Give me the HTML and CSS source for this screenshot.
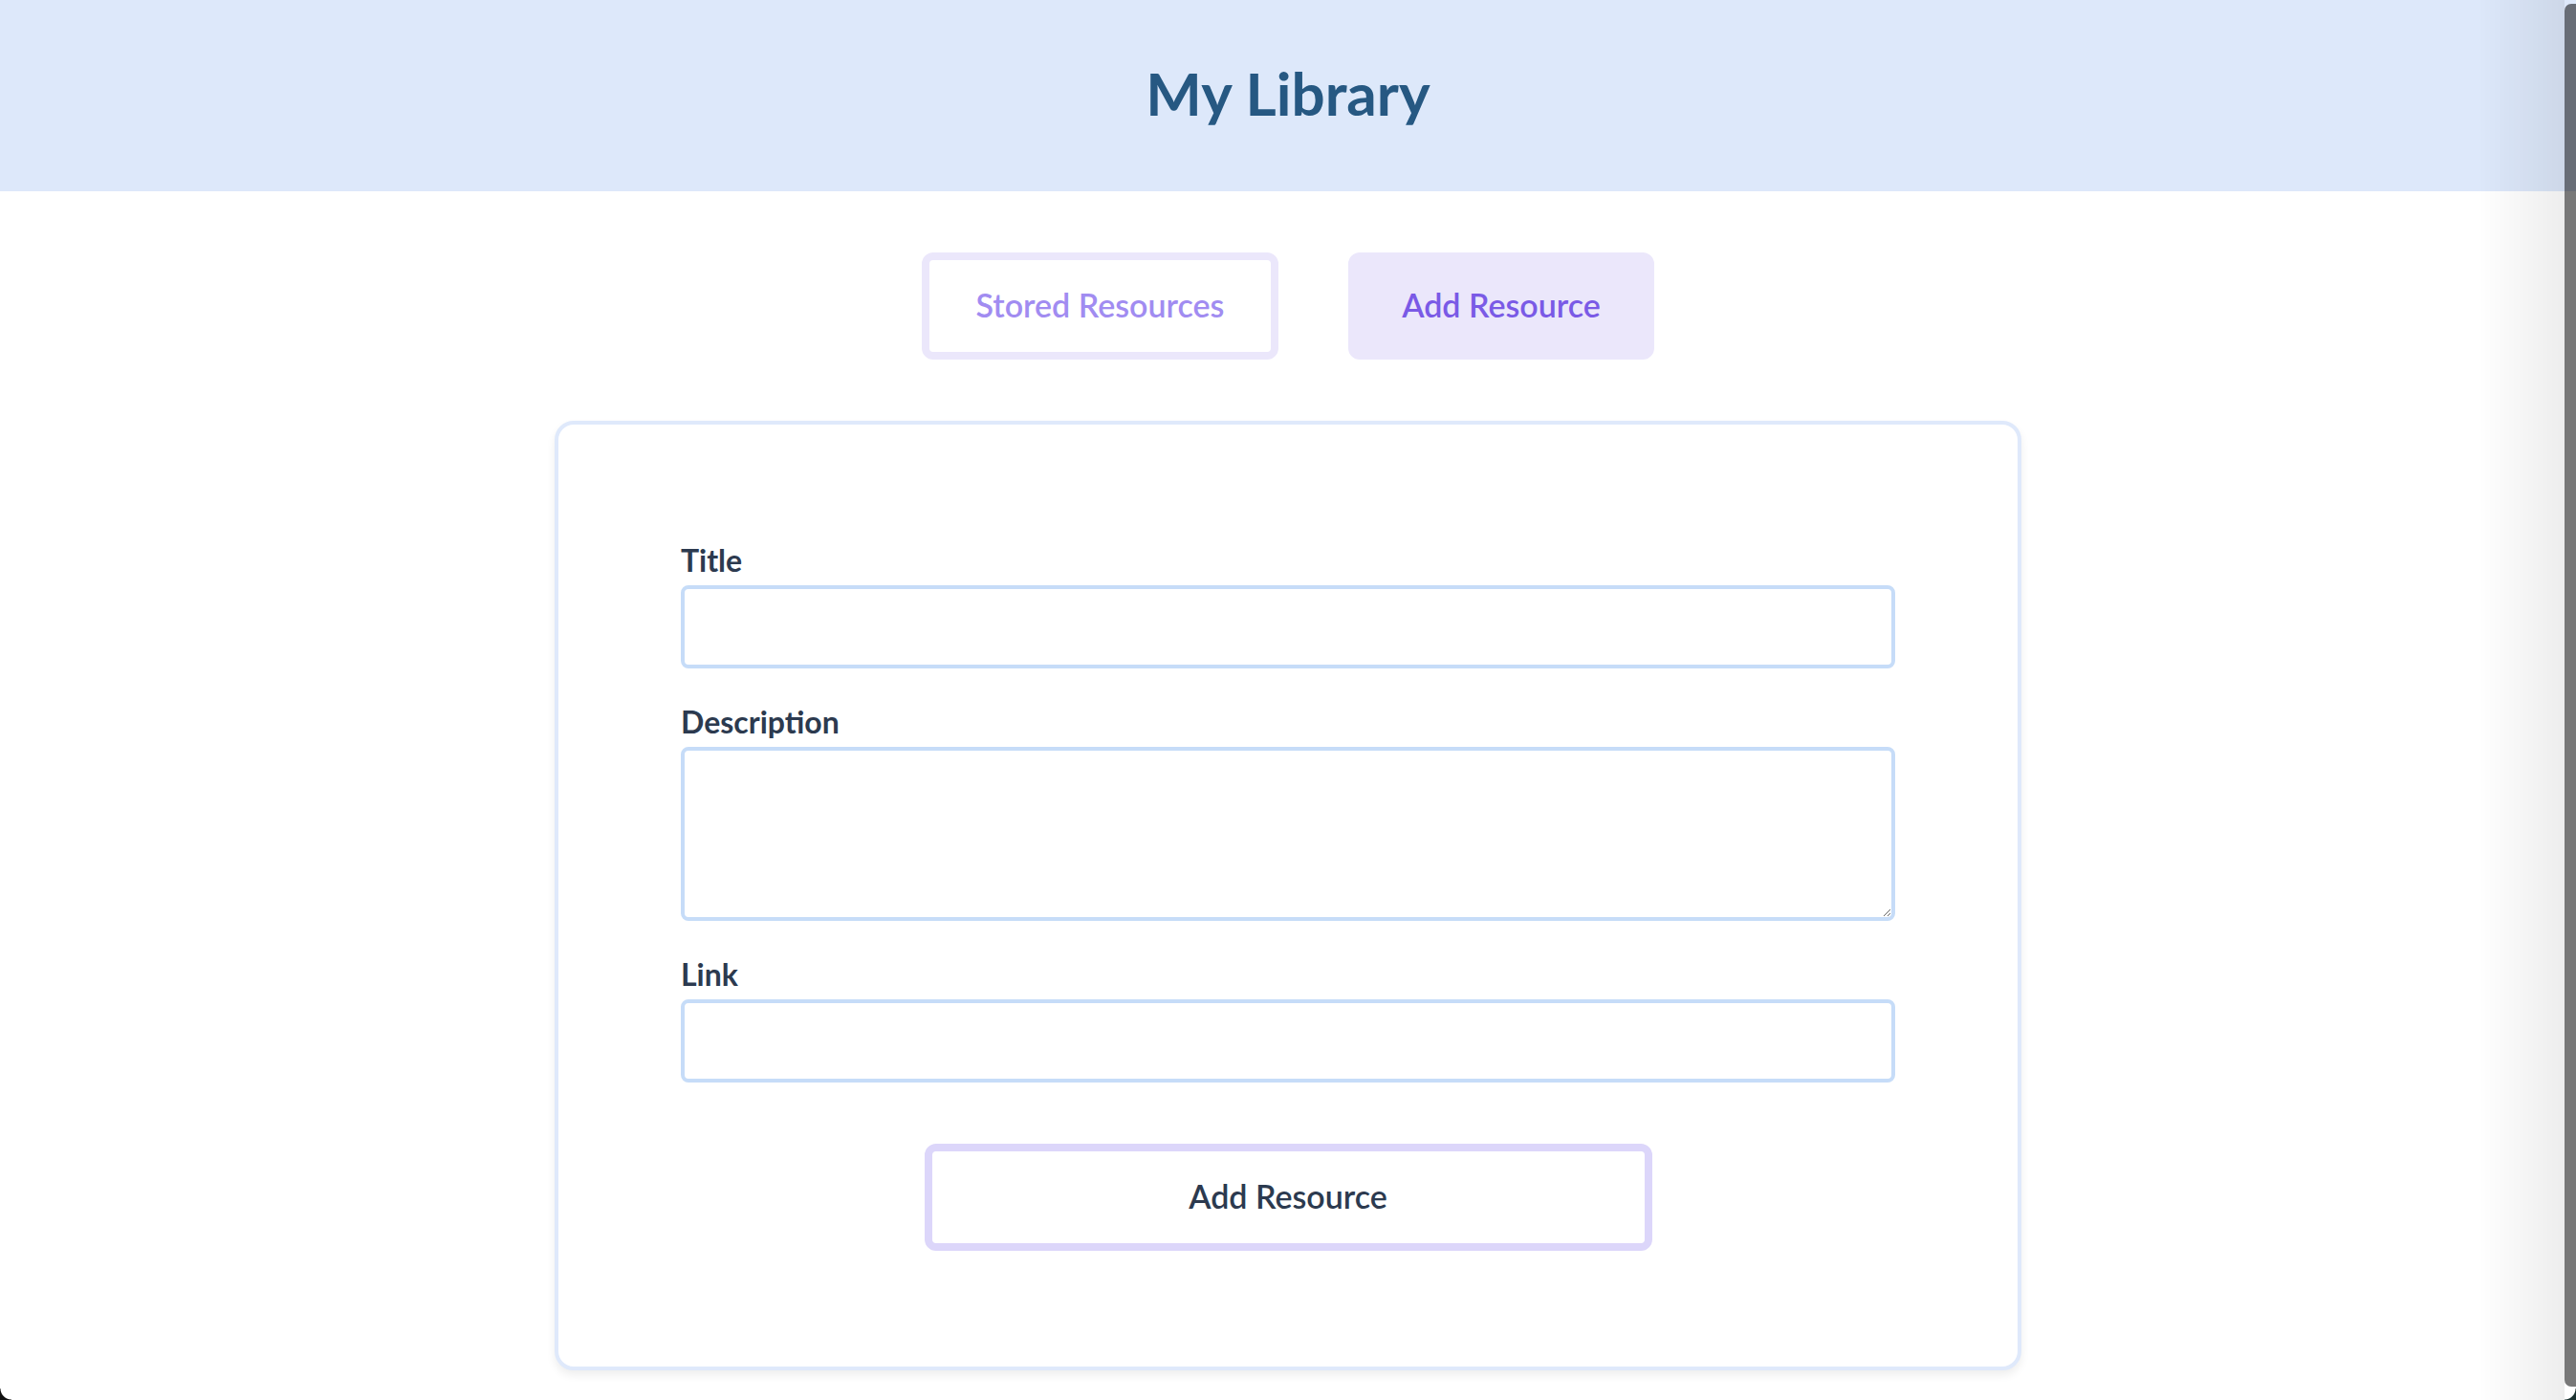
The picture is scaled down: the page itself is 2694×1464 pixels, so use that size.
FILE: index.html
```html
<!DOCTYPE html>
<html lang="en">
<head>
<meta charset="utf-8">
<title>My Library</title>
<link rel="stylesheet" href="styles.css">
</head>
<body>
<header class="site-header">
  <h1 class="site-title">My Library</h1>
</header>
<main class="main">
  <nav class="tabs">
    <button class="tab tab-outline" type="button">Stored Resources</button>
    <button class="tab tab-active" type="button">Add Resource</button>
  </nav>
  <section class="card">
    <form class="form">
      <div class="field">
        <label class="label" for="title">Title</label>
        <input class="input" id="title" type="text">
      </div>
      <div class="field">
        <label class="label" for="description">Description</label>
        <textarea class="input textarea" id="description"></textarea>
      </div>
      <div class="field">
        <label class="label" for="link">Link</label>
        <input class="input" id="link" type="text">
      </div>
      <div class="actions">
        <button class="submit" type="button">Add Resource</button>
      </div>
    </form>
  </section>
</main>
<div class="edge-shade"></div>
<div class="edge-bar"></div>
<div class="corner corner-bl"></div>
<div class="corner corner-br"></div>
</body>
</html>
```

FILE: styles.css
```css
* {
  box-sizing: border-box;
}

html, body {
  margin: 0;
  padding: 0;
  background: #ffffff;
  height: 100%;
  overflow: hidden;
}

body {
  font-family: Lato, "Noto Sans", "Liberation Sans", sans-serif;
  color: #2c3a4f;
}

.site-header {
  height: 200px;
  background: #dde8fa;
  padding-top: 60px;
}

.site-title {
  margin: 0;
  text-align: center;
  font-size: 62px;
  line-height: 74px;
  font-weight: 700;
  color: #265882;
}

.main {
  display: flex;
  flex-direction: column;
  align-items: center;
  padding-top: 64px;
}

.tabs {
  display: flex;
  gap: 73px;
  justify-content: center;
}

.tab {
  font-family: inherit;
  font-size: 34px;
  line-height: 40px;
  font-weight: 600;
  padding: 27px 40px 29px;
  border: 8px solid #ebe7fb;
  border-radius: 12px;
  cursor: pointer;
}

.tab-outline {
  background: #ffffff;
  color: #a18cf1;
  width: 373px;
}

.tab-active {
  background: #ebe7fb;
  color: #7a5ae6;
  width: 320px;
}

.card {
  margin-top: 64px;
  width: 1534px;
  border: 4px solid #dfe9fb;
  border-radius: 20px;
  background: #ffffff;
  box-shadow: 0 5px 10px rgba(0, 0, 0, 0.07);
  padding: 123px 128px 121px;
}

.form {
  display: flex;
  flex-direction: column;
  gap: 37px;
}

.field {
  display: flex;
  flex-direction: column;
  gap: 7px;
}

.label {
  font-size: 32px;
  line-height: 38px;
  font-weight: 700;
  color: #2c3a4f;
}

.input {
  display: block;
  width: 100%;
  height: 87px;
  border: 4px solid #c6dcf8;
  border-radius: 8px;
  background: #ffffff;
  font-family: inherit;
  font-size: 28px;
  padding: 0 16px;
  outline: none;
}

.textarea {
  height: 182px;
  padding: 12px 16px;
  resize: vertical;
}

.actions {
  display: flex;
  justify-content: center;
  padding-top: 27px;
}

.submit {
  width: 761px;
  height: 112px;
  border: 8px solid #dcd6fa;
  border-radius: 12px;
  background: #ffffff;
  font-family: inherit;
  font-size: 34px;
  line-height: 40px;
  font-weight: 600;
  color: #2c3a4f;
  padding: 0 0 3px;
  cursor: pointer;
}

.edge-shade {
  position: fixed;
  top: 0;
  bottom: 0;
  right: 12px;
  width: 90px;
  background: linear-gradient(to right, rgba(0, 0, 0, 0), rgba(0, 0, 0, 0.07));
  pointer-events: none;
}

.edge-bar {
  position: fixed;
  top: 4px;
  bottom: 14px;
  right: 0;
  width: 12px;
  background: rgba(0, 0, 0, 0.53);
  border-radius: 7px 0 0 7px;
  pointer-events: none;
}

.corner {
  position: fixed;
  bottom: 0;
  width: 12px;
  height: 12px;
  pointer-events: none;
}

.corner-bl {
  left: 0;
  background: radial-gradient(circle at 100% 0, transparent 11px, #111 12px);
}

.corner-br {
  right: 0;
  background: radial-gradient(circle at 0 0, transparent 11px, #1d3331 12px);
}
```
